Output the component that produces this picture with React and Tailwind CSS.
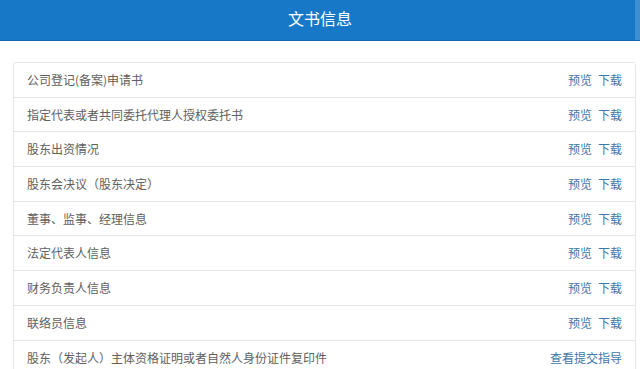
import React from "react";

const rows = [
  "公司登记(备案)申请书",
  "指定代表或者共同委托代理人授权委托书",
  "股东出资情况",
  "股东会决议（股东决定）",
  "董事、监事、经理信息",
  "法定代表人信息",
  "财务负责人信息",
  "联络员信息",
];

export default function App() {
  return (
    <div
      className="w-[640px] h-[369px] overflow-hidden bg-white"
      style={{ fontFamily: '"Microsoft YaHei", "Noto Sans CJK SC", sans-serif' }}
    >
      <div className="h-[41px] pb-[5px] bg-[#1878c8] border-b border-[#1569b0] flex items-center justify-center relative">
        <span className="text-white text-[16px] leading-none">文书信息</span>
        <div className="absolute right-0 top-0 w-[5px] h-[40px] bg-[#3d8fd4]" />
      </div>
      <div className="mt-[21px] ml-[13px] w-[623px] border border-[#e6e6e6] rounded-[3px]">
        {rows.map((r) => (
          <div
            key={r}
            className="h-[34.7px] border-b border-[#e6e6e6] flex items-center justify-between px-[13px] text-[12px]"
          >
            <span className="text-[#606060]">{r}</span>
            <span className="text-[#4276a8] flex gap-[6px]">
              <span>预览</span>
              <span>下载</span>
            </span>
          </div>
        ))}
        <div className="h-[34.7px] flex items-center justify-between px-[13px] text-[12px]">
          <span className="text-[#606060]">股东（发起人）主体资格证明或者自然人身份证件复印件</span>
          <span className="text-[#4276a8]">查看提交指导</span>
        </div>
      </div>
    </div>
  );
}
